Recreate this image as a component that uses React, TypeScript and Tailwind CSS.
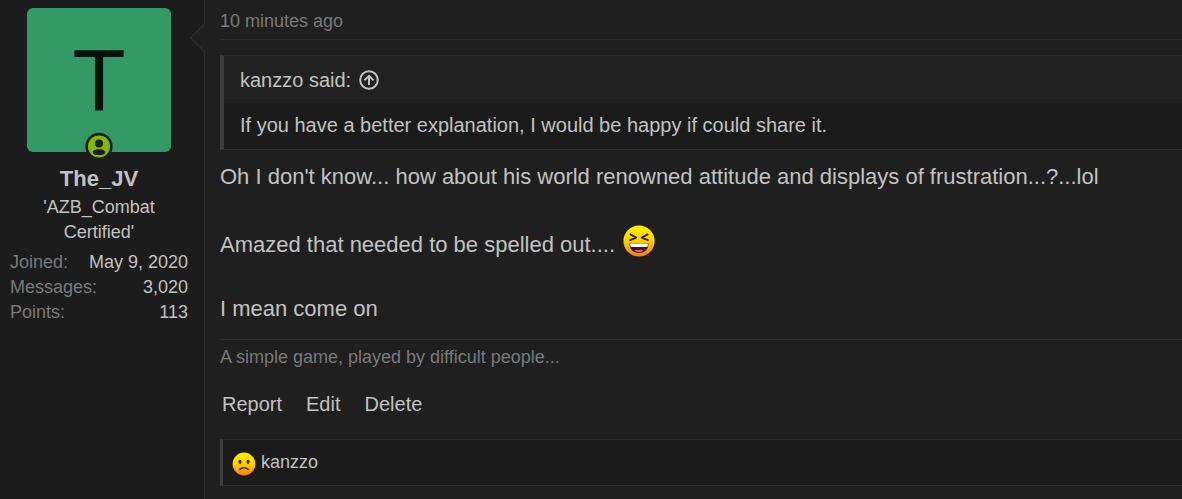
import React from "react";

const stats = [
  { label: "Joined:", value: "May 9, 2020" },
  { label: "Messages:", value: "3,020" },
  { label: "Points:", value: "113" },
];

const actions = ["Report", "Edit", "Delete"];

function OnlineBadge() {
  return (
    <svg viewBox="0 0 28 28" className="absolute -bottom-2 left-[58px] size-7" aria-label="Online now">
      <circle cx="14" cy="14.4" r="13.6" fill="#1c1c1c" />
      <circle cx="14" cy="14.4" r="11" fill="#7fb900" />
      <circle cx="14" cy="11.6" r="4" fill="#1c1c1c" />
      <path d="M7.8 20.2c0-2 2.8-3 6.2-3s6.2 1 6.2 3c0 2-2.8 2.9-6.2 2.9s-6.2-.9-6.2-2.9z" fill="#1c1c1c" />
    </svg>
  );
}

function JumpIcon() {
  return (
    <svg viewBox="0 0 20 20" className="size-5" fill="none" stroke="#c2c2c2" strokeWidth="2">
      <circle cx="10" cy="10" r="8.8" />
      <path d="M10 15V6M5.4 10.4 10 5.8l4.6 4.6" />
    </svg>
  );
}

function LaughingEmoji() {
  return (
    <svg viewBox="0 0 32 32" className="ml-2 inline-block size-8 align-[-5px]" role="img" aria-label="Laughing">
      <defs>
        <linearGradient id="laugh" x1="0" y1="0" x2="0" y2="1">
          <stop offset="0" stopColor="#ffef00" />
          <stop offset=".5" stopColor="#ffd000" />
          <stop offset="1" stopColor="#f47a16" />
        </linearGradient>
      </defs>
      <circle cx="16" cy="16" r="15.6" fill="url(#laugh)" />
      <path
        d="m7.4 9.4 5.8 3.2-6 2.6M24.6 9.4l-5.8 3.2 6 2.6"
        fill="none"
        stroke="#35200a"
        strokeWidth="1.9"
        strokeLinecap="round"
        strokeLinejoin="round"
      />
      <path d="M6.6 18.2h18.8c.4 5.6-3.4 9.6-9.4 9.6s-9.8-4-9.4-9.6z" fill="#2f1f25" />
      <path d="M7.2 18.6h17.6v2q-.2 1.4-1.4 1.4H8.6q-1.2 0-1.4-1.4z" fill="#fff" />
      <path d="M11.6 25.8c1.2-1.5 2.8-1.3 4.4-.7 1.6-.6 3.2-.8 4.4.7-2.3 1.6-6.5 1.6-8.8 0z" fill="#e8597f" />
    </svg>
  );
}

function SadEmoji() {
  return (
    <svg viewBox="0 0 24 24" className="mt-1 size-6" role="img" aria-label="Sad">
      <defs>
        <linearGradient id="sad" x1="0" y1="0" x2="0" y2="1">
          <stop offset="0" stopColor="#ffef00" />
          <stop offset=".5" stopColor="#ffd000" />
          <stop offset="1" stopColor="#f47a16" />
        </linearGradient>
      </defs>
      <circle cx="12" cy="12" r="11.4" fill="url(#sad)" />
      <ellipse cx="8" cy="9.8" rx="1.6" ry="2.1" fill="#41270b" />
      <ellipse cx="16" cy="9.8" rx="1.6" ry="2.1" fill="#41270b" />
      <path d="M7.8 17.4q4.2-3.2 8.4 0" fill="none" stroke="#41270b" strokeWidth="1.4" strokeLinecap="round" />
    </svg>
  );
}

function UserCell() {
  return (
    <aside className="w-[205px] shrink-0 border-r border-[#2b2b2b] bg-[#1c1c1c] py-2 pr-4 pl-2.5 text-lg leading-[25px]">
      <div className="relative mx-auto flex size-36 items-center justify-center rounded-md bg-[#339966] pb-0.5 text-[87px] leading-none text-[#06130d]">
        T
        <OnlineBadge />
      </div>
      <h4 className="mt-3 text-center text-[22px] leading-[30px] font-bold">
        <a href="#user">The_JV</a>
      </h4>
      <h5 className="mt-px px-6 text-center">'AZB_Combat Certified'</h5>
      <div className="mt-[5px]">
        {stats.map((s) => (
          <dl key={s.label} className="flex justify-between">
            <dt className="text-[#7a7a7a]">{s.label}</dt>
            <dd>{s.value}</dd>
          </dl>
        ))}
      </div>
    </aside>
  );
}

export default function App() {
  return (
    <article className="flex min-h-screen bg-[#1f1f1f] font-['Liberation_Sans',Arial,sans-serif] text-[#c2c2c2]">
      <UserCell />
      <div className="relative min-w-0 flex-1 pb-3 pl-[15px]">
        {/* speech arrow over the column border */}
        <svg viewBox="0 0 15 28" className="absolute top-6 -left-[15px] h-7 w-[15px]">
          <path d="M15 0 1 14l14 14z" fill="#1f1f1f" />
          <path d="M14.5 0 .7 13.8l13.8 13.8" fill="none" stroke="#303030" strokeWidth="1.2" />
        </svg>

        <header className="border-b border-[#2b2b2b] pt-[9px] pb-[5px] text-lg leading-[25px] text-[#7a7a7a]">
          <time>10 minutes ago</time>
        </header>

        <blockquote className="mt-[15px] border-y border-l-4 border-y-[#2b2b2b] border-l-[#3d3d3d] bg-[#1b1b1b] text-[20px] leading-7">
          <div className="bg-[#212121] px-4 pt-2.5 pb-[9px]">
            <a href="#quoted" className="flex items-center gap-2">
              kanzzo said:
              <JumpIcon />
            </a>
          </div>
          <div className="px-4 pt-2 pb-2.5">If you have a better explanation, I would be happy if could share it.</div>
        </blockquote>

        <div className="mt-[11px] text-[22px] leading-8">
          Oh I don't know... how about his world renowned attitude and displays of frustration...?...lol
          <br />
          <br />
          Amazed that needed to be spelled out....
          <LaughingEmoji />
          <br />
          <br />I mean come on
        </div>

        <aside className="mt-[14px] border-t border-[#2b2b2b] pt-[5px] text-lg leading-[25px] text-[#7a7a7a]">
          A simple game, played by difficult people...
        </aside>

        <footer>
          <div className="mt-5 flex gap-6 pl-[2px] text-[20px] leading-7">
            {actions.map((a) => (
              <a key={a} href={`#${a.toLowerCase()}`}>
                {a}
              </a>
            ))}
          </div>
          <div className="mt-[21px] flex items-center gap-[5px] border-y border-l-3 border-y-[#2b2b2b] border-l-[#3d3d3d] bg-[#1b1b1b] px-[9px] pt-2 pb-[9px] text-lg leading-[25px]">
            <SadEmoji />
            <a href="#reactions">kanzzo</a>
          </div>
        </footer>
      </div>
    </article>
  );
}
